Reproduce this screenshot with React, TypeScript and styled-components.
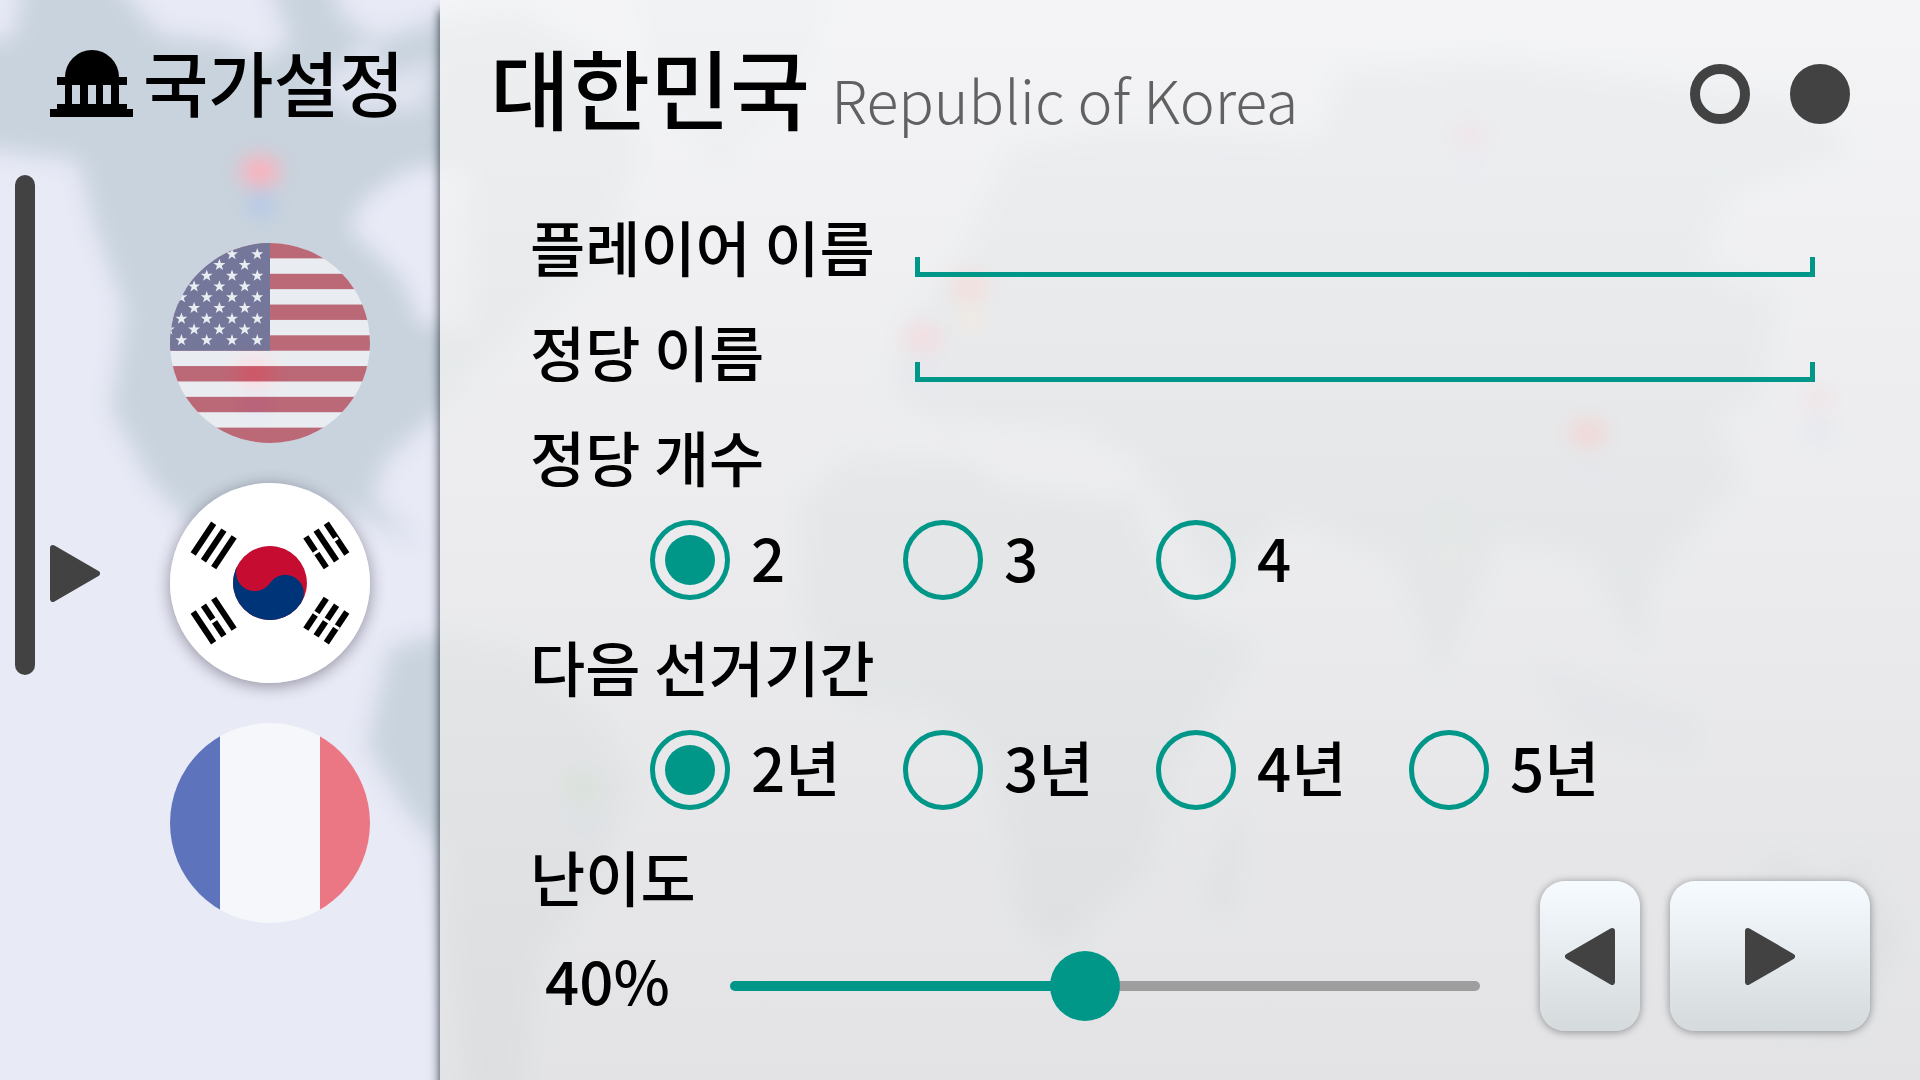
import React, { useState } from "react";
import styled, { createGlobalStyle } from "styled-components";

const teal = "#009688";
const ink = "#424242";

const GlobalStyle = createGlobalStyle`
  *, *::before, *::after { box-sizing: border-box; }
  body {
    margin: 0;
    color: #000;
    background: #e8eaf6;
    font-family: "Noto Sans CJK KR", "Noto Sans", sans-serif;
    font-weight: 500;
  }
  h1, h2, p, ul, fieldset, legend { margin: 0; padding: 0; border: 0; font: inherit; }
  button { padding: 0; border: 0; background: none; cursor: pointer; }
`;

/* ---------- shell ---------- */

const Shell = styled.div`
  display: grid;
  grid-template-columns: 440px minmax(0, 1fr);
  min-height: 100vh;
`;

const MapBackdrop = styled.svg`
  position: fixed;
  inset: 0;
  z-index: -1;
  width: 100%;
  height: 100%;
`;

const Sidebar = styled.aside`
  display: flex;
  flex-direction: column;
`;

const SidebarHeader = styled.header`
  display: flex;
  align-items: center;
  gap: 10px;
  padding: 20px 0 20px 50px;
`;

const SidebarTitle = styled.h2`
  font-size: 71px;
  line-height: 120px;
  white-space: nowrap;
`;

const CapitolIcon = styled.svg`
  width: 83px;
  height: 73px;
  padding-top: 6px;
`;

const SidebarBody = styled.div`
  display: flex;
  gap: 15px;
  padding: 15px;
`;

const ScrollThumb = styled.div`
  width: 20px;
  height: 500px;
  border-radius: 10px;
  background: ${ink};
`;

const CountryList = styled.ul`
  display: flex;
  flex-direction: column;
  gap: 40px;
  padding-top: 68px;
  list-style: none;
`;

const CountryItem = styled.li`
  display: flex;
  align-items: center;
  gap: 70px;
`;

const MarkerSlot = styled.span`
  display: flex;
  width: 50px;
  padding-bottom: 20px;
`;

const Arrow = styled.svg<{ $flip?: boolean }>`
  width: 50px;
  height: 57px;
  fill: ${ink};
  stroke: ${ink};
  stroke-width: 6;
  stroke-linejoin: round;
  transform: ${(p) => (p.$flip ? "scaleX(-1)" : "none")};
`;

const FlagButton = styled.button<{ $selected: boolean }>`
  display: block;
  width: 200px;
  height: 200px;
  border-radius: 50%;
  overflow: hidden;
  opacity: ${(p) => (p.$selected ? 1 : 0.6)};
  box-shadow: ${(p) => (p.$selected ? "0 3px 16px rgba(40, 30, 50, 0.45)" : "none")};

  svg { display: block; width: 100%; height: 100%; }
`;

/* ---------- main panel ---------- */

const Panel = styled.main`
  display: flex;
  flex-direction: column;
  padding: 26px 50px 50px;
  background: linear-gradient(rgba(246, 246, 246, 0.8), rgba(225, 225, 225, 0.8));
  box-shadow: 0 10px 10px rgba(10, 20, 30, 0.85);
`;

const PanelHeader = styled.header`
  display: flex;
  align-items: center;
  justify-content: space-between;
  padding-right: 20px;
`;

const Heading = styled.div`
  display: flex;
  align-items: baseline;
  gap: 21px;
  line-height: 120px;
  white-space: nowrap;
`;

const CountryName = styled.h1`
  font-size: 87px;
`;

const CountrySubtitle = styled.p`
  font-size: 59px;
  font-weight: 300;
  color: #616161;
`;

const Pager = styled.nav`
  display: flex;
  gap: 40px;
  padding-top: 2px;
`;

const PageDot = styled.button<{ $filled?: boolean }>`
  width: 60px;
  height: 60px;
  border: 10px solid ${ink};
  border-radius: 50%;
  background: ${(p) => (p.$filled ? ink : "transparent")};
`;

const Form = styled.form`
  display: flex;
  flex: 1;
  flex-direction: column;
  padding: 34px 0 0 40px;
  font-size: 60px;
  line-height: 105px;
`;

const FieldRow = styled.div`
  display: grid;
  grid-template-columns: 385px minmax(0, 1fr);
  align-items: end;
  padding-right: 55px;
`;

const TextField = styled.input`
  height: 72px;
  margin-bottom: 21px;
  padding: 0 20px;
  border: 0;
  border-bottom: 5px solid ${teal};
  outline: 0;
  color: #000;
  font: inherit;
  line-height: 60px;
  background:
    linear-gradient(${teal}, ${teal}) left bottom / 5px 15px no-repeat,
    linear-gradient(${teal}, ${teal}) right bottom / 5px 15px no-repeat;
`;

const Group = styled.fieldset`
  min-width: 0;
`;

const GroupLegend = styled.legend`
  display: block;
`;

const Options = styled.div`
  display: grid;
  grid-template-columns: repeat(4, minmax(0, 253px));
  height: 105px;
  padding: 12px 0 13px 120px;
`;

const Option = styled.label`
  display: flex;
  align-items: center;
  gap: 21px;
  height: 80px;
  line-height: 80px;
  white-space: nowrap;
`;

const OptionText = styled.span`
  padding-bottom: 8px;
`;

const Radio = styled.input`
  display: grid;
  flex: none;
  place-content: center;
  width: 80px;
  height: 80px;
  margin: 0;
  border: 5px solid ${teal};
  border-radius: 50%;
  appearance: none;

  &:checked::before {
    content: "";
    width: 50px;
    height: 50px;
    border-radius: 50%;
    background: ${teal};
  }
`;

const BottomRow = styled.div`
  display: flex;
  align-items: flex-end;
  gap: 60px;
`;

const Difficulty = styled.div`
  flex: 1;
  min-width: 0;
`;

const DifficultyLabel = styled.label`
  display: block;
`;

const SliderRow = styled.div`
  display: grid;
  grid-template-columns: 185px minmax(0, 1fr);
  align-items: center;
  padding: 23px 0 10px 15px;
  line-height: 70px;
`;

const Percent = styled.output`
  height: 70px;
  padding-bottom: 14px;
  line-height: 56px;
`;

const Slider = styled.input<{ $ratio: number }>`
  width: 100%;
  height: 70px;
  margin: 0;
  appearance: none;
  background: transparent;

  &::-webkit-slider-runnable-track {
    height: 10px;
    border-radius: 5px;
    background: linear-gradient(
      to right,
      ${teal} ${(p) => p.$ratio * 100}%,
      #9e9e9e ${(p) => p.$ratio * 100}%
    );
  }

  &::-webkit-slider-thumb {
    width: 70px;
    height: 70px;
    margin-top: -30px;
    border-radius: 50%;
    background: ${teal};
    appearance: none;
  }
`;

const StepNav = styled.div`
  display: flex;
  gap: 30px;
`;

const StepButton = styled.button<{ $wide?: boolean }>`
  display: flex;
  align-items: center;
  justify-content: center;
  width: ${(p) => (p.$wide ? 200 : 100)}px;
  height: 150px;
  border-radius: 25px;
  background: linear-gradient(#f5fbff, #d5dadc);
  box-shadow: 0 1px 8px rgba(0, 0, 0, 0.4);
`;

/* ---------- drawings ---------- */

const Triangle = ({ flip }: { flip?: boolean }) => (
  <Arrow $flip={flip} viewBox="0 0 50 57" aria-hidden="true">
    <path d="M3 3L47 28.5L3 54Z" />
  </Arrow>
);

const starPoints = Array.from({ length: 10 }, (_, i) => {
  const r = i % 2 ? 2.5 : 6.3;
  const a = (Math.PI / 5) * i - Math.PI / 2;
  return `${(r * Math.cos(a)).toFixed(2)},${(r * Math.sin(a)).toFixed(2)}`;
}).join(" ");

const UsaFlag = () => (
  <svg viewBox="0 0 200 200" aria-hidden="true">
    <rect width="200" height="200" fill="#fff" />
    {[0, 2, 4, 6, 8, 10, 12].map((i) => (
      <rect key={i} y={(i * 200) / 13} width="200" height={200 / 13} fill="#b22234" />
    ))}
    <rect width="100" height={1400 / 13} fill="#3c3b6e" />
    {Array.from({ length: 9 }, (_, row) =>
      [0, 1, 2, 3].map((col) => (
        <polygon
          key={`${row}-${col}`}
          points={starPoints}
          fill="#fff"
          transform={`translate(${(row % 2 ? 74.7 : 87.3) - col * 25.3} ${11.2 + row * 10.75})`}
        />
      ))
    )}
  </svg>
);

const KoreaFlag = () => (
  <svg viewBox="-32.5 -32.5 65 65" aria-hidden="true">
    <rect x="-33" y="-33" width="66" height="66" fill="#fff" />
    <g transform="rotate(-56.31)">
      <path d="M-6-26H6M-6-22H6M-6-18H6M-6 26H6M-6 22H6M-6 18H6" stroke="#000" strokeWidth="2" />
      <path d="M0 17v10" stroke="#fff" />
      <circle r="12" fill="#c60c30" />
      <path d="M0-12A6 6 0 0 0 0 0A6 6 0 0 1 0 12A12 12 0 0 1 0-12Z" fill="#003478" />
    </g>
    <g transform="rotate(-123.69)">
      <path d="M-6-26H6M-6-22H6M-6-18H6M-6 26H6M-6 22H6M-6 18H6" stroke="#000" strokeWidth="2" />
      <path d="M0-23.5v3M0 17v3.5M0 23.5v3" stroke="#fff" />
    </g>
  </svg>
);

const FranceFlag = () => (
  <svg viewBox="0 0 200 200" aria-hidden="true">
    <rect width="200" height="200" fill="#fff" />
    <rect width="50" height="200" fill="#002395" />
    <rect x="150" width="50" height="200" fill="#ed2939" />
  </svg>
);

const pins: [number, number, string, string][] = [
  [260, 171, "#ffb0bb", "#b0c4ee"],
  [255, 373, "#ffa4ae", "#b8bcec"],
  [970, 287, "#ff9a8a", "#ffcf9a"],
  [923, 338, "#ff98a8", "#c8c8ee"],
  [1470, 135, "#dcb0c4", "#c0c8e8"],
  [1588, 433, "#ff8078", "#c4c8e4"],
  [1818, 398, "#f0c4d0", "#b8c8f0"],
  [1448, 521, "#b8d4cc", "#dcdccc"],
  [582, 787, "#a8cca4", "#b8d0e0"],
];

const WorldMap = () => (
  <MapBackdrop viewBox="0 0 1920 1080" preserveAspectRatio="xMinYMin slice" aria-hidden="true">
    <defs>
      <filter id="soft" x="-10%" y="-10%" width="120%" height="120%" colorInterpolationFilters="sRGB">
        <feGaussianBlur stdDeviation="11" />
      </filter>
      <filter id="glow" x="-100%" y="-100%" width="300%" height="300%" colorInterpolationFilters="sRGB">
        <feGaussianBlur stdDeviation="10" />
      </filter>
    </defs>
    <rect width="1920" height="1080" fill="#e8eaf6" />
    <g filter="url(#soft)" fill="#c8d3dd">
      <path d="M-40 50L15 35L25-30H105L160 35L225 42L262 62L290 40L265-30H325L345 20L380 40L440 20L520 10L600 60L640 150L600 260L520 330L440 412L385 460L372 500L420 545L350 510L290 500L210 545L150 480L112 410L125 310L95 225L78 160L-40 145Z" />
      <path d="M390 648L440 635L520 650L600 720L640 780L600 880L540 960L520 1100H470L450 960L440 850L400 800L368 745Z" />
      <path d="M640-20H830L800 80L720 170L660 90Z" opacity="0.5" />
      <path d="M800 500L850 455L960 460L1130 490L1180 620L1255 645L1180 760L1150 870L1060 950L1020 920L990 760L930 710L850 700L805 620Z" />
      <path d="M960 260L1010 150L1120 130L1320 140L1340 70L1500 60L1800 100L1850 150L1730 190L1700 260L1780 300L1760 400L1720 420L1740 480L1650 580L1640 650L1590 560L1500 540L1440 670L1395 560L1290 520L1220 590L1150 480L1080 430L960 430L890 400L900 330Z" />
      <path d="M1690 940L1780 850L1830 880L1860 850L1900 940L1850 1030L1700 1010Z" />
      <path d="M1225 830L1245 810L1230 920L1205 900Z" />
      <path d="M1530 660L1700 720L1690 760L1580 730Z" opacity="0.6" />
    </g>
    <g filter="url(#soft)" fill="#e8eaf6">
      <path d="M348 228L365 198L410 168L470 165V325H420L402 280Z" />
      <path d="M330 75L375 30L382 75L440 60L425 110L350 112L300 80Z" opacity="0.75" />
      <path d="M950 420L1140 460L1120 500L1000 485Z" />
    </g>
    <g filter="url(#glow)">
      {pins.map(([x, y, top, bottom]) => (
        <g key={x}>
          <ellipse cx={x} cy={y} rx="20" ry="15" fill={top} />
          <ellipse cx={x + 1} cy={y + 33} rx="12" ry="11" fill={bottom} />
        </g>
      ))}
    </g>
  </MapBackdrop>
);

/* ---------- page ---------- */

const countries = [
  { id: "us", label: "미국", Flag: UsaFlag },
  { id: "kr", label: "대한민국", Flag: KoreaFlag },
  { id: "fr", label: "프랑스", Flag: FranceFlag },
];

const MAX_DIFFICULTY = 85;

type ChoiceProps = {
  legend: string;
  name: string;
  options: string[];
  value: string;
  onChange: (value: string) => void;
};

const Choice = ({ legend, name, options, value, onChange }: ChoiceProps) => (
  <Group>
    <GroupLegend>{legend}</GroupLegend>
    <Options>
      {options.map((option) => (
        <Option key={option}>
          <Radio
            type="radio"
            name={name}
            value={option}
            checked={option === value}
            onChange={() => onChange(option)}
          />
          <OptionText>{option}</OptionText>
        </Option>
      ))}
    </Options>
  </Group>
);

export default function App() {
  const [country, setCountry] = useState("kr");
  const [parties, setParties] = useState("2");
  const [term, setTerm] = useState("2년");
  const [difficulty, setDifficulty] = useState(40);

  return (
    <>
      <GlobalStyle />
      <WorldMap />
      <Shell>
        <Sidebar>
          <SidebarHeader>
            <CapitolIcon viewBox="0 0 83 67" aria-hidden="true">
              <path d="M15 27A27 27 0 0 1 69 27H77V35H69V54H77V59H83V67H0V59H7V54H15V35H7V27ZM22 35V54H30V35ZM38 35V54H46V35ZM53 35V54H61V35Z" fillRule="evenodd" />
            </CapitolIcon>
            <SidebarTitle>국가설정</SidebarTitle>
          </SidebarHeader>
          <SidebarBody>
            <ScrollThumb />
            <CountryList>
              {countries.map(({ id, label, Flag }) => (
                <CountryItem key={id}>
                  <MarkerSlot>{id === country && <Triangle />}</MarkerSlot>
                  <FlagButton
                    type="button"
                    $selected={id === country}
                    aria-label={label}
                    aria-pressed={id === country}
                    onClick={() => setCountry(id)}
                  >
                    <Flag />
                  </FlagButton>
                </CountryItem>
              ))}
            </CountryList>
          </SidebarBody>
        </Sidebar>

        <Panel>
          <PanelHeader>
            <Heading>
              <CountryName>대한민국</CountryName>
              <CountrySubtitle>Republic of Korea</CountrySubtitle>
            </Heading>
            <Pager>
              <PageDot type="button" aria-label="1" />
              <PageDot type="button" aria-label="2" $filled />
            </Pager>
          </PanelHeader>

          <Form onSubmit={(e) => e.preventDefault()}>
            <FieldRow>
              <label htmlFor="player">플레이어 이름</label>
              <TextField id="player" type="text" />
            </FieldRow>
            <FieldRow>
              <label htmlFor="party">정당 이름</label>
              <TextField id="party" type="text" />
            </FieldRow>
            <Choice
              legend="정당 개수"
              name="parties"
              options={["2", "3", "4"]}
              value={parties}
              onChange={setParties}
            />
            <Choice
              legend="다음 선거기간"
              name="term"
              options={["2년", "3년", "4년", "5년"]}
              value={term}
              onChange={setTerm}
            />
            <BottomRow>
              <Difficulty>
                <DifficultyLabel htmlFor="difficulty">난이도</DifficultyLabel>
                <SliderRow>
                  <Percent htmlFor="difficulty">{difficulty}%</Percent>
                  <Slider
                    id="difficulty"
                    type="range"
                    min={0}
                    max={MAX_DIFFICULTY}
                    value={difficulty}
                    $ratio={difficulty / MAX_DIFFICULTY}
                    onChange={(e) => setDifficulty(Number(e.target.value))}
                  />
                </SliderRow>
              </Difficulty>
              <StepNav>
                <StepButton type="button" aria-label="이전">
                  <Triangle flip />
                </StepButton>
                <StepButton type="submit" aria-label="다음" $wide>
                  <Triangle />
                </StepButton>
              </StepNav>
            </BottomRow>
          </Form>
        </Panel>
      </Shell>
    </>
  );
}
